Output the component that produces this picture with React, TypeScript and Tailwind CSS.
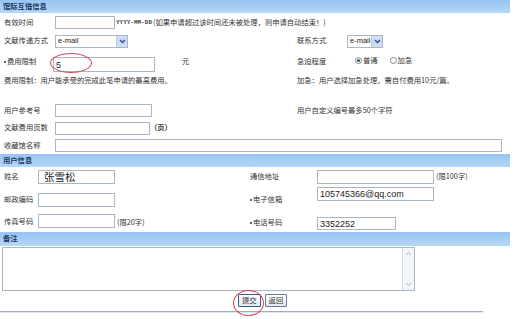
import React from 'react';

const cn = (...c: (string | false | undefined)[]) => c.filter(Boolean).join(' ');

const Bar: React.FC<{ title: string; className?: string }> = ({ title, className }) => (
  <div
    className={cn(
      'flex w-[510px] items-center bg-linear-to-b from-[#98c3f0] to-[#b6d7f7] pl-[3px] font-bold text-[#1d3764]',
      className
    )}
  >
    {title}
  </div>
);

const Input: React.FC<{ className: string; value?: string; valueClass?: string }> = ({
  className,
  value,
  valueClass,
}) => (
  <input
    readOnly
    value={value ?? ''}
    className={cn(
      'box-border block border border-[#a9b6c4] bg-white px-[2px] text-[#222] outline-none',
      valueClass ?? "font-['Liberation_Sans',sans-serif] text-[9px]",
      className
    )}
  />
);

const Select: React.FC<{ className: string }> = ({ className }) => (
  <div className={cn('box-border flex h-[13px] items-stretch overflow-hidden border border-[#a9b6c4] bg-white', className)}>
    <span className="flex flex-1 items-center overflow-hidden whitespace-nowrap pl-[2px] font-['Liberation_Sans',sans-serif] text-[7.5px] text-[#222]">
      e-mail
    </span>
    <span className="flex w-[11px] shrink-0 items-center justify-center border-l border-[#bccbe3] bg-[#cfdcf3]">
      <svg width="7" height="5" viewBox="0 0 7 5">
        <path d="M1 1l2.5 2.5L6 1" stroke="#2a4b8c" strokeWidth="1.3" fill="none" />
      </svg>
    </span>
  </div>
);

const Radio: React.FC<{ checked?: boolean }> = ({ checked }) => (
  <span className="box-border flex h-[7px] w-[7px] items-center justify-center rounded-full border border-[#7d8b99] bg-white">
    {checked && <span className="h-[3px] w-[3px] rounded-full bg-[#2f5a32]" />}
  </span>
);

const Button: React.FC<{ label: string; active?: boolean }> = ({ label, active }) => (
  <span
    className={cn(
      'box-border flex h-[13px] items-center rounded-[1px] border bg-linear-to-b from-white to-[#e3e9f0] px-[3px]',
      active ? 'border-[#3b5a8c]' : 'border-[#6b7d93]'
    )}
  >
    {label}
  </span>
);

const Dot = () => <span className="mr-[1px] inline-block h-[2px] w-[2px] rounded-full bg-[#333] align-middle" />;

export default function App() {
  return (
    <div className="relative h-[319px] w-[514px] overflow-hidden bg-white font-['Noto_Sans_CJK_SC',sans-serif] text-[7.3px] leading-none text-[#333]">
      <Bar title="馆际互借信息" className="h-[13px]" />

      {/* 有效时间 */}
      <div className="flex h-[19px] items-center">
        <span className="w-[55px] pl-[4px]">有效时间</span>
        <Input className="h-[13px] w-[60px]" />
        <span className="ml-[1px] font-['Liberation_Mono',monospace] text-[6px] font-bold text-[#444]">YYYY-MM-DD</span>
        <span className="ml-[1px]">(如果申请超过该时间还未被处理，则申请自动结束！)</span>
      </div>

      {/* 文献传递方式 / 联系方式 */}
      <div className="flex h-[18px] items-center">
        <div className="flex w-[297px] items-center">
          <span className="w-[55px] pl-[4px]">文献传递方式</span>
          <Select className="w-[73px]" />
        </div>
        <span className="w-[50px]">联系方式</span>
        <Select className="w-[36px]" />
      </div>

      {/* 费用限制 / 急迫程度 */}
      <div className="flex h-[22px] items-start">
        <div className="flex w-[297px] items-start">
          <span className="mt-[7.5px] w-[53px] pl-[4px]">
            <Dot />
            费用限制
          </span>
          <div className="relative mt-[7px]">
            <Input className="h-[15px] w-[102px]" value="5" />
            <span className="pointer-events-none absolute left-[-3px] top-[-4px] h-[20px] w-[42px] rounded-[50%] border border-[#d9485a]" />
          </div>
          <span className="ml-[27px] mt-[7.5px]">元</span>
        </div>
        <span className="mt-[7.5px] w-[58px]">急迫程度</span>
        <div className="mt-[7px] flex h-[7px] items-center">
          <Radio checked />
          <span className="ml-[1px]">普通</span>
          <span className="ml-[12px]">
            <Radio />
          </span>
          <span className="ml-[1px]">加急</span>
        </div>
      </div>

      {/* 说明 */}
      <div className="flex h-[18px] items-center">
        <span className="w-[297px] pl-[4px]">费用限制：用户能承受的完成此笔申请的最高费用。</span>
        <span>加急：用户选择加急处理，需自付费用10元/篇。</span>
      </div>

      <div className="h-[12px]" />

      {/* 用户参考号 */}
      <div className="flex h-[17px] items-center">
        <div className="flex w-[297px] items-center">
          <span className="w-[55px] pl-[4px]">用户参考号</span>
          <Input className="h-[13px] w-[97px]" />
        </div>
        <span>用户自定义编号最多50个字符</span>
      </div>

      {/* 文献费用页数 */}
      <div className="flex h-[18px] items-center">
        <span className="w-[55px] pl-[4px]">文献费用页数</span>
        <Input className="h-[13px] w-[95px]" />
        <span className="font-bold">（页）</span>
      </div>

      {/* 收藏馆名称 */}
      <div className="flex h-[17px] items-center">
        <span className="w-[55px] pl-[4px]">收藏馆名称</span>
        <Input className="h-[13px] w-[447px]" />
      </div>

      <Bar title="用户信息" className="h-[13px]" />

      {/* 姓名 / 通信地址 */}
      <div className="flex h-[19px] items-center">
        <div className="flex w-[250px] items-center">
          <span className="w-[38px] pl-[4px]">姓名</span>
          <Input
            className="h-[14px] w-[77px]"
            value="张雪松"
            valueClass="font-['Noto_Sans_CJK_SC',sans-serif] text-[10.5px] pl-[5px]"
          />
        </div>
        <span className="w-[67px]">通信地址</span>
        <Input className="h-[14px] w-[117px]" />
        <span className="ml-[2px] mt-[1px]">(限100字)</span>
      </div>

      {/* 邮政编码 / 电子信箱 */}
      <div className="flex h-[22px] items-start">
        <div className="flex w-[250px] items-start">
          <span className="mt-[9.5px] w-[38px] pl-[4px]">邮政编码</span>
          <Input className="mt-[7px] h-[14px] w-[77px]" />
        </div>
        <span className="mt-[9.5px] w-[67px]">
          <Dot />
          电子信箱
        </span>
        <Input className="mt-[1px] h-[14px] w-[117px]" value="105745366@qq.com" />
      </div>

      {/* 传真号码 / 电话号码 */}
      <div className="flex h-[24px] items-start">
        <div className="flex w-[250px] items-start">
          <span className="mt-[9.5px] w-[38px] pl-[4px]">传真号码</span>
          <Input className="mt-[6px] h-[14px] w-[77px]" />
          <span className="ml-[2px] mt-[10.5px]">(限20字)</span>
        </div>
        <span className="mt-[10.5px] w-[67px]">
          <Dot />
          电话号码
        </span>
        <Input className="mt-[9px] h-[13px] w-[79px]" value="3352252" />
      </div>

      <Bar title="备注" className="h-[14px]" />

      {/* 备注 */}
      <div className="ml-[2px] mt-[1px] box-border flex h-[44px] w-[413px] border border-[#a9b6c4] bg-white">
        <div className="flex-1" />
        <div className="flex w-[12px] flex-col justify-between border-l border-[#d6dde5] bg-[#f4f6f9]">
          <span className="flex h-[11px] items-center justify-center">
            <svg width="7" height="5" viewBox="0 0 7 5">
              <path d="M1 4l2.5-2.5L6 4" stroke="#a8b2bd" strokeWidth="1" fill="none" />
            </svg>
          </span>
          <span className="flex h-[11px] items-center justify-center">
            <svg width="7" height="5" viewBox="0 0 7 5">
              <path d="M1 1l2.5 2.5L6 1" stroke="#a8b2bd" strokeWidth="1" fill="none" />
            </svg>
          </span>
        </div>
      </div>

      {/* 按钮 */}
      <div className="mt-[3px] flex items-center gap-[4px] pl-[238px]">
        <div className="relative">
          <Button label="提交" active />
          <span className="pointer-events-none absolute left-[-5px] top-[-4px] h-[26px] w-[31px] rounded-[50%] border border-[#d9485a]" />
        </div>
        <Button label="返回" />
      </div>

      <div className="mt-[4px] h-[2px] w-[483px] border-t border-[#a4adb8] bg-[#dde8f4]" />
    </div>
  );
}
